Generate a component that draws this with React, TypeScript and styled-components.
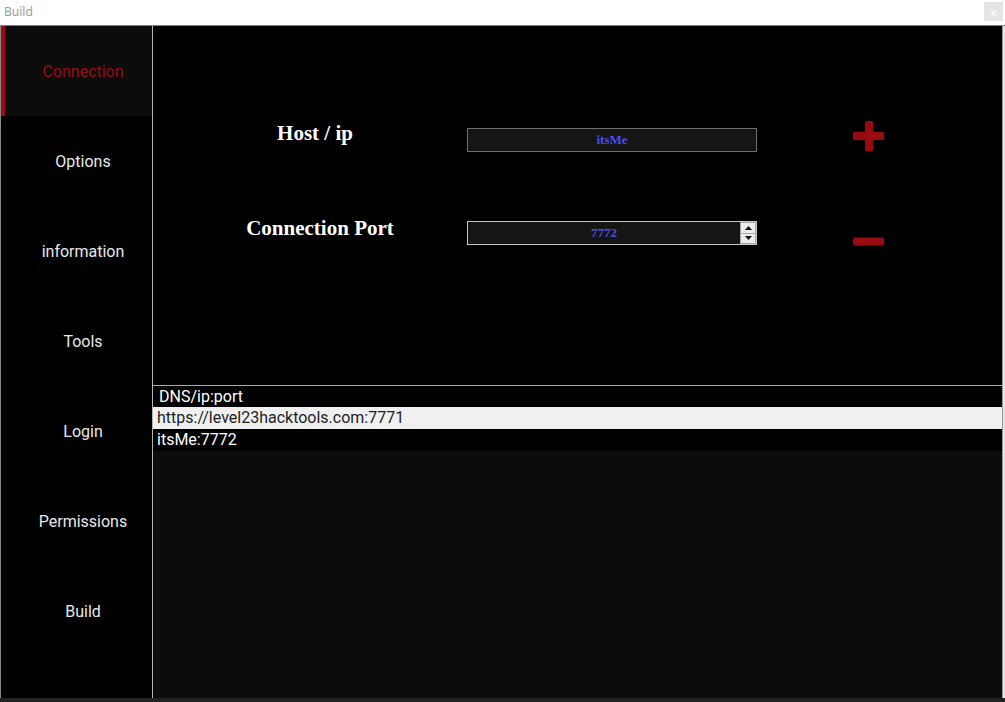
import React from "react";
import styled, { createGlobalStyle } from "styled-components";

const GlobalStyle = createGlobalStyle`
  html, body {
    margin: 0;
    padding: 0;
    background: #ffffff;
  }

  * {
    box-sizing: border-box;
  }
`;

const Window = styled.div`
  width: 1005px;
  height: 702px;
  display: flex;
  flex-direction: column;
  background: #ffffff;
  overflow: hidden;
`;

const TitleBar = styled.header`
  height: 26px;
  flex: none;
  display: flex;
  align-items: flex-start;
  justify-content: space-between;
  padding: 0 2px 0 4px;
  border-bottom: 1px solid #808080;
`;

const Title = styled.span`
  font-family: "Noto Sans", "Open Sans", sans-serif;
  font-size: 12px;
  line-height: 24px;
  color: #9c9c9c;
`;

const CloseButton = styled.button`
  width: 19px;
  height: 19px;
  margin-top: 2px;
  padding: 0;
  border: none;
  background: #e5e5e5;
  color: #fafafa;
  font-family: "Noto Sans", sans-serif;
  font-size: 11px;
  font-weight: bold;
  line-height: 19px;
`;

const Body = styled.div`
  flex: 1;
  min-height: 0;
  display: flex;
`;

const Sidebar = styled.nav`
  width: 152px;
  flex: none;
  display: flex;
  flex-direction: column;
  background: #000000;
  border-left: 1px solid #8a8a8a;
`;

const NavItem = styled.div<{ $active?: boolean }>`
  height: 90px;
  flex: none;
  display: flex;
  align-items: center;
  justify-content: center;
  padding-left: 9px;
  border-left: 4px solid ${(p) => (p.$active ? "#9b0a14" : "transparent")};
  background: ${(p) => (p.$active ? "#0c0c0c" : "#000000")};
  color: ${(p) => (p.$active ? "#9b0a14" : "#e8e8e8")};
  font-family: Roboto, "Liberation Sans", sans-serif;
  font-size: 16px;
  cursor: pointer;
`;

const Main = styled.main`
  flex: 1;
  min-width: 0;
  display: flex;
  flex-direction: column;
  background: #000000;
  border-left: 1px solid #b4b4b4;
  border-right: 1px solid #9a9a9a;
`;

const EdgeStrip = styled.div`
  width: 2px;
  flex: none;
  background: #e4e4e4;
`;

const FormArea = styled.section`
  height: 360px;
  flex: none;
  display: flex;
  border-bottom: 1px solid #aaaaaa;
`;

const LabelColumn = styled.div`
  width: 314px;
  flex: none;
  display: flex;
  flex-direction: column;
  gap: 69px;
  padding: 94px 0 0 20px;
`;

const FieldLabel = styled.label<{ $nudge?: number }>`
  display: block;
  padding-right: ${(p) => p.$nudge ?? 0}px;
  text-align: center;
  color: #ffffff;
  font-family: "Liberation Serif", "Times New Roman", serif;
  font-weight: bold;
  font-size: 21px;
  line-height: 26px;
`;

const FieldColumn = styled.div`
  width: 290px;
  flex: none;
  display: flex;
  flex-direction: column;
  gap: 69px;
  padding-top: 102px;
`;

const FieldBox = styled.div<{ $focused?: boolean }>`
  height: 24px;
  display: flex;
  background: #151515;
  border: 1px solid ${(p) => (p.$focused ? "#c8c8c8" : "#6c6c6c")};
`;

const FieldInput = styled.input`
  flex: 1;
  min-width: 0;
  padding: 0;
  border: none;
  outline: none;
  background: transparent;
  color: #4d4de6;
  text-align: center;
  font-family: "Liberation Serif", "Times New Roman", serif;
  font-weight: bold;
  font-size: 13px;
`;

const Spinner = styled.div`
  width: 16px;
  flex: none;
  display: flex;
  flex-direction: column;
  gap: 1px;
  padding: 1px;
  background: #a8a8a8;
`;

const SpinButton = styled.button`
  flex: 1;
  display: flex;
  align-items: center;
  justify-content: center;
  padding: 0;
  border: none;
  background: #ececec;
`;

const ActionColumn = styled.div`
  flex: 1;
  display: flex;
  flex-direction: column;
  align-items: flex-start;
  gap: 86px;
  padding: 95px 0 0 96px;
`;

const IconButton = styled.button`
  display: flex;
  padding: 0;
  border: none;
  background: transparent;
  cursor: pointer;
`;

const EndpointList = styled.section`
  flex: 1;
  display: flex;
  flex-direction: column;
  background: #0c0c0c;
`;

const ListHeader = styled.div`
  height: 21px;
  padding-left: 6px;
  background: #000000;
  color: #ffffff;
  font-family: Roboto, "Liberation Sans", sans-serif;
  font-size: 16px;
  line-height: 21px;
`;

const ListRow = styled.div<{ $selected?: boolean }>`
  height: 22px;
  padding-left: 4px;
  background: ${(p) => (p.$selected ? "#f0f0f0" : "#000000")};
  color: ${(p) => (p.$selected ? "#1e1e1e" : "#ffffff")};
  font-family: Roboto, "Liberation Sans", sans-serif;
  font-size: 16px;
  line-height: 22px;
  white-space: nowrap;
`;

const BottomStrip = styled.div`
  height: 4px;
  flex: none;
  background: #222222;
`;

const navItems = [
  "Connection",
  "Options",
  "information",
  "Tools",
  "Login",
  "Permissions",
  "Build",
];

const endpoints = ["https://level23hacktools.com:7771", "itsMe:7772"];

const ARROW = "#111111";
const RED = "#9a0a13";

function PlusIcon() {
  return (
    <svg width="31" height="30" viewBox="0 0 31 30">
      <rect x="0" y="11" width="31" height="8" rx="1.5" fill={RED} />
      <rect x="12" y="0" width="8" height="30" rx="1.5" fill={RED} />
    </svg>
  );
}

function MinusIcon() {
  return (
    <svg width="31" height="9" viewBox="0 0 31 9">
      <rect x="0" y="0.5" width="31" height="8" rx="1.5" fill={RED} />
    </svg>
  );
}

function Arrow({ up }: { up?: boolean }) {
  return (
    <svg width="7" height="4" viewBox="0 0 7 4">
      <polygon points={up ? "3.5,0 7,4 0,4" : "0,0 7,0 3.5,4"} fill={ARROW} />
    </svg>
  );
}

export default function App() {
  return (
    <>
      <GlobalStyle />
      <Window>
        <TitleBar>
          <Title>Build</Title>
          <CloseButton>x</CloseButton>
        </TitleBar>
        <Body>
          <Sidebar>
            {navItems.map((item, i) => (
              <NavItem key={item} $active={i === 0}>
                {item}
              </NavItem>
            ))}
          </Sidebar>
          <Main>
            <FormArea>
              <LabelColumn>
                <FieldLabel $nudge={10}>Host / ip</FieldLabel>
                <FieldLabel>Connection Port</FieldLabel>
              </LabelColumn>
              <FieldColumn>
                <FieldBox>
                  <FieldInput defaultValue="itsMe" />
                </FieldBox>
                <FieldBox $focused>
                  <FieldInput defaultValue="7772" />
                  <Spinner>
                    <SpinButton>
                      <Arrow up />
                    </SpinButton>
                    <SpinButton>
                      <Arrow />
                    </SpinButton>
                  </Spinner>
                </FieldBox>
              </FieldColumn>
              <ActionColumn>
                <IconButton>
                  <PlusIcon />
                </IconButton>
                <IconButton>
                  <MinusIcon />
                </IconButton>
              </ActionColumn>
            </FormArea>
            <EndpointList>
              <ListHeader>DNS/ip:port</ListHeader>
              {endpoints.map((e, i) => (
                <ListRow key={e} $selected={i === 0}>
                  {e}
                </ListRow>
              ))}
            </EndpointList>
          </Main>
          <EdgeStrip />
        </Body>
        <BottomStrip />
      </Window>
    </>
  );
}
